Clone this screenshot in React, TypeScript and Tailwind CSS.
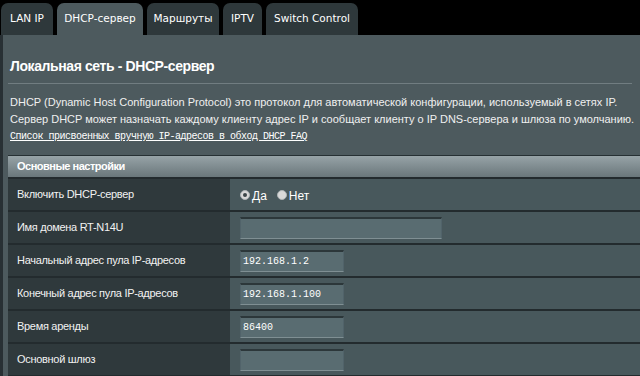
import React from 'react';

const tabs = [
  { label: 'LAN IP', w: 'w-[52px]' },
  { label: 'DHCP-сервер', w: 'w-[86px]', active: true },
  { label: 'Маршруты', w: 'w-[72px]' },
  { label: 'IPTV', w: 'w-[39px]' },
  { label: 'Switch Control', w: 'w-[92px]' },
];

function Input({ value, wide }: { value?: string; wide?: boolean }) {
  return (
    <div
      className={`${wide ? 'w-[202px]' : 'w-[104px]'} h-[22px] bg-[#596c71] border-t-2 border-t-[#2c373a] border-b border-b-[#7f8f93] border-x border-x-[#51636a] flex items-center pl-[2px] text-white text-[10px] font-['Liberation_Mono',monospace]`}
    >
      {value}
    </div>
  );
}

function Radio({ checked }: { checked?: boolean }) {
  return (
    <span className="w-[10px] h-[10px] rounded-full bg-[#d9d9d9] border border-[#aeb4b6] flex items-center justify-center">
      {checked && <span className="w-[4px] h-[4px] rounded-full bg-[#3c4649]" />}
    </span>
  );
}

function Row({ label, children }: { label: string; children?: React.ReactNode }) {
  return (
    <div className="flex h-[33px] border-b-2 border-[#232b2e]">
      <div className="w-[222px] bg-[#2f393c] flex items-center pl-[9px] text-[11px] tracking-[-0.3px] text-[#f2f2f2]">{label}</div>
      <div className="flex-1 bg-[#48585c] flex items-center pl-[10px]">{children}</div>
    </div>
  );
}

export default function App() {
  return (
    <div className="w-[640px] h-[376px] bg-black overflow-hidden font-['Liberation_Sans',Arial,sans-serif]">
      {/* tabs */}
      <div className="flex gap-[4px] pl-[1px] pt-[3px] h-[35px]">
        {tabs.map((t) => (
          <div
            key={t.label}
            className={`${t.w} h-full rounded-t-[7px] flex items-center justify-center text-white text-[10.5px] font-['DejaVu_Sans',sans-serif] ${
              t.active ? 'bg-[#4d5a5e]' : 'bg-[#2e383b]'
            }`}
          >
            {t.label}
          </div>
        ))}
      </div>

      <div className="bg-[#4d5a5e] border-l-[3px] border-[#283034] pl-[5px] pt-[22px] h-[341px]">
        <h1 className="text-white font-bold text-[14px] tracking-[-0.4px] leading-[18px] pl-[2px]">Локальная сеть - DHCP-сервер</h1>
        <div className="h-px bg-[#717d81] mt-[8px] mr-[8px]" />
        <div className="mt-[10px] pl-[2px] text-[11px] leading-[17px] text-[#f0f0f0]">
          <p>DHCP (Dynamic Host Configuration Protocol) это протокол для автоматической конфигурации, используемый в сетях IP.</p>
          <p>Сервер DHCP может назначать каждому клиенту адрес IP и сообщает клиенту о IP DNS-сервера и шлюза по умолчанию.</p>
          <a className="underline text-white text-[10px] tracking-[-0.5px] font-['Liberation_Mono',monospace] leading-[17px] block">
            Список присвоенных вручную IP-адресов в обход DHCP FAQ
          </a>
        </div>

        <div className="mt-[10px]">
          <div className="h-[24px] border-t border-[#263033] border-b-2 border-b-[#232b2e] bg-gradient-to-b from-[#97a3a7] to-[#6a777b] flex items-center pl-[9px] text-white font-bold text-[11px] tracking-[-0.5px]">
            Основные настройки
          </div>
          <Row label="Включить DHCP-сервер">
            <div className="flex items-center gap-[1px] text-white text-[12px]">
              <Radio checked />
              <span className="mr-[9px] ml-[1px] mt-[2px]">Да</span>
              <Radio />
              <span className="ml-[1px] mt-[2px]">Нет</span>
            </div>
          </Row>
          <Row label="Имя домена RT-N14U">
            <Input wide />
          </Row>
          <Row label="Начальный адрес пула IP-адресов">
            <Input value="192.168.1.2" />
          </Row>
          <Row label="Конечный адрес пула IP-адресов">
            <Input value="192.168.1.100" />
          </Row>
          <Row label="Время аренды">
            <Input value="86400" />
          </Row>
          <Row label="Основной шлюз">
            <Input />
          </Row>
        </div>
      </div>
    </div>
  );
}
